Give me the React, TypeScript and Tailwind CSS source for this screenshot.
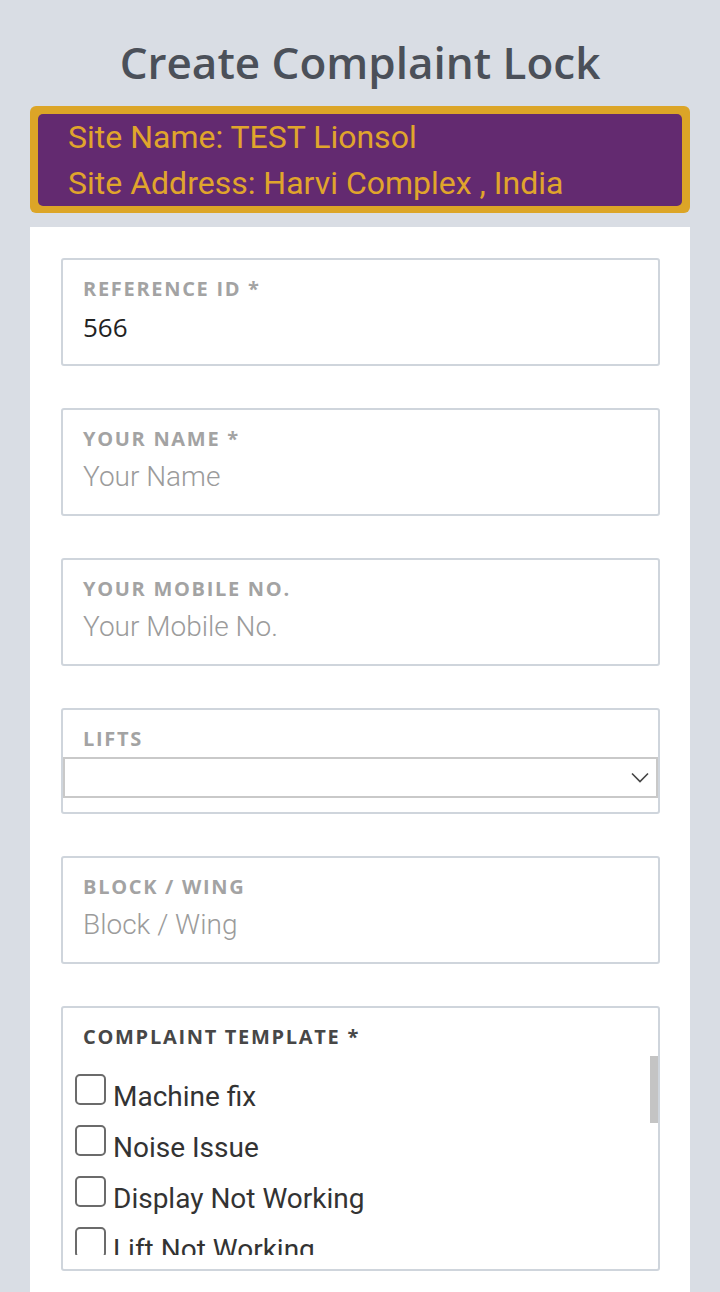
import React from "react";

const Field = ({
  label,
  children,
}: {
  label: string;
  children: React.ReactNode;
}) => (
  <div className="mb-[42px] h-[108px] rounded-[3px] border-2 border-[#cfd5dc] px-[20px] pt-[16px]">
    <div className="font-['Open_Sans',sans-serif] text-[20px] leading-[26px] font-bold tracking-[1.7px] text-[#a3a3a3]">
      {label}
    </div>
    <div className="mt-[7px] h-[36px]">{children}</div>
  </div>
);

const Placeholder = ({ text }: { text: string }) => (
  <div className="font-['Roboto',sans-serif] text-[28px] leading-[36px] font-light text-[#9b9b9b]">
    {text}
  </div>
);

const Checkbox = ({ label }: { label: string }) => (
  <div className="flex h-[51px] shrink-0 items-start">
    <div className="h-[31px] w-[31px] shrink-0 rounded-[5px] border-2 border-[#6b6b6b] bg-white" />
    <span className="ml-[7px] mt-[5px] font-['Roboto',sans-serif] text-[28px] leading-[36px] text-[#333333]">
      {label}
    </span>
  </div>
);

export default function App() {
  return (
    <div className="h-[1292px] overflow-hidden bg-[#d9dde4] px-[30px] pt-[32px]">
      <h1 className="text-center font-['Open_Sans',sans-serif] text-[44px] leading-[60px] font-semibold text-[#4b5059]">
        Create Complaint Lock
      </h1>
      <div className="mt-[14px] rounded-[6px] bg-[#dca527] px-[8px] pt-[8px] pb-[7px]">
        <div className="rounded-[5px] bg-[#632a70] pl-[30px] font-['Roboto',sans-serif] text-[32px] leading-[46px] text-[#e0a52c]">
          <div>Site Name: TEST Lionsol</div>
          <div>Site Address: Harvi Complex , India</div>
        </div>
      </div>
      <div className="mt-[14px] bg-white pl-[31px] pr-[30px] pt-[31px] pb-[40px]">
        <Field label="REFERENCE ID *">
          <div className="font-['Open_Sans',sans-serif] text-[26px] leading-[36px] text-[#222222]">
            566
          </div>
        </Field>
        <Field label="YOUR NAME *">
          <Placeholder text="Your Name" />
        </Field>
        <Field label="YOUR MOBILE NO.">
          <Placeholder text="Your Mobile No." />
        </Field>
        <div className="mb-[42px] h-[106px] rounded-[3px] border-2 border-[#cfd5dc] pt-[16px]">
          <div className="px-[20px] font-['Open_Sans',sans-serif] text-[20px] leading-[26px] font-bold tracking-[1.7px] text-[#a3a3a3]">
            LIFTS
          </div>
          <div className="mt-[5px] flex h-[41px] items-center justify-end border-2 border-[#c9c9c9] pr-[7px]">
            <svg width="18" height="11" viewBox="0 0 18 11" fill="none">
              <path d="M1 1.5 L9 9.5 L17 1.5" stroke="#444" strokeWidth="1.6" />
            </svg>
          </div>
        </div>
        <Field label="BLOCK / WING">
          <Placeholder text="Block / Wing" />
        </Field>
        <div className="h-[265px] rounded-[3px] border-2 border-[#cfd5dc] pt-[16px]">
          <div className="px-[20px] font-['Open_Sans',sans-serif] text-[20px] leading-[26px] font-bold tracking-[1.7px] text-[#474747]">
            COMPLAINT TEMPLATE *
          </div>
          <div className="relative mt-[6px] h-[199px] overflow-hidden">
            <div className="flex flex-col pl-[12px] pt-[18px]">
              <Checkbox label="Machine fix" />
              <Checkbox label="Noise Issue" />
              <Checkbox label="Display Not Working" />
              <Checkbox label="Lift Not Working" />
              <Checkbox label="Door Issue" />
            </div>
            <div className="absolute right-0 top-0 h-[67px] w-[8px] bg-[#c4c4c4]" />
          </div>
        </div>
      </div>
    </div>
  );
}
